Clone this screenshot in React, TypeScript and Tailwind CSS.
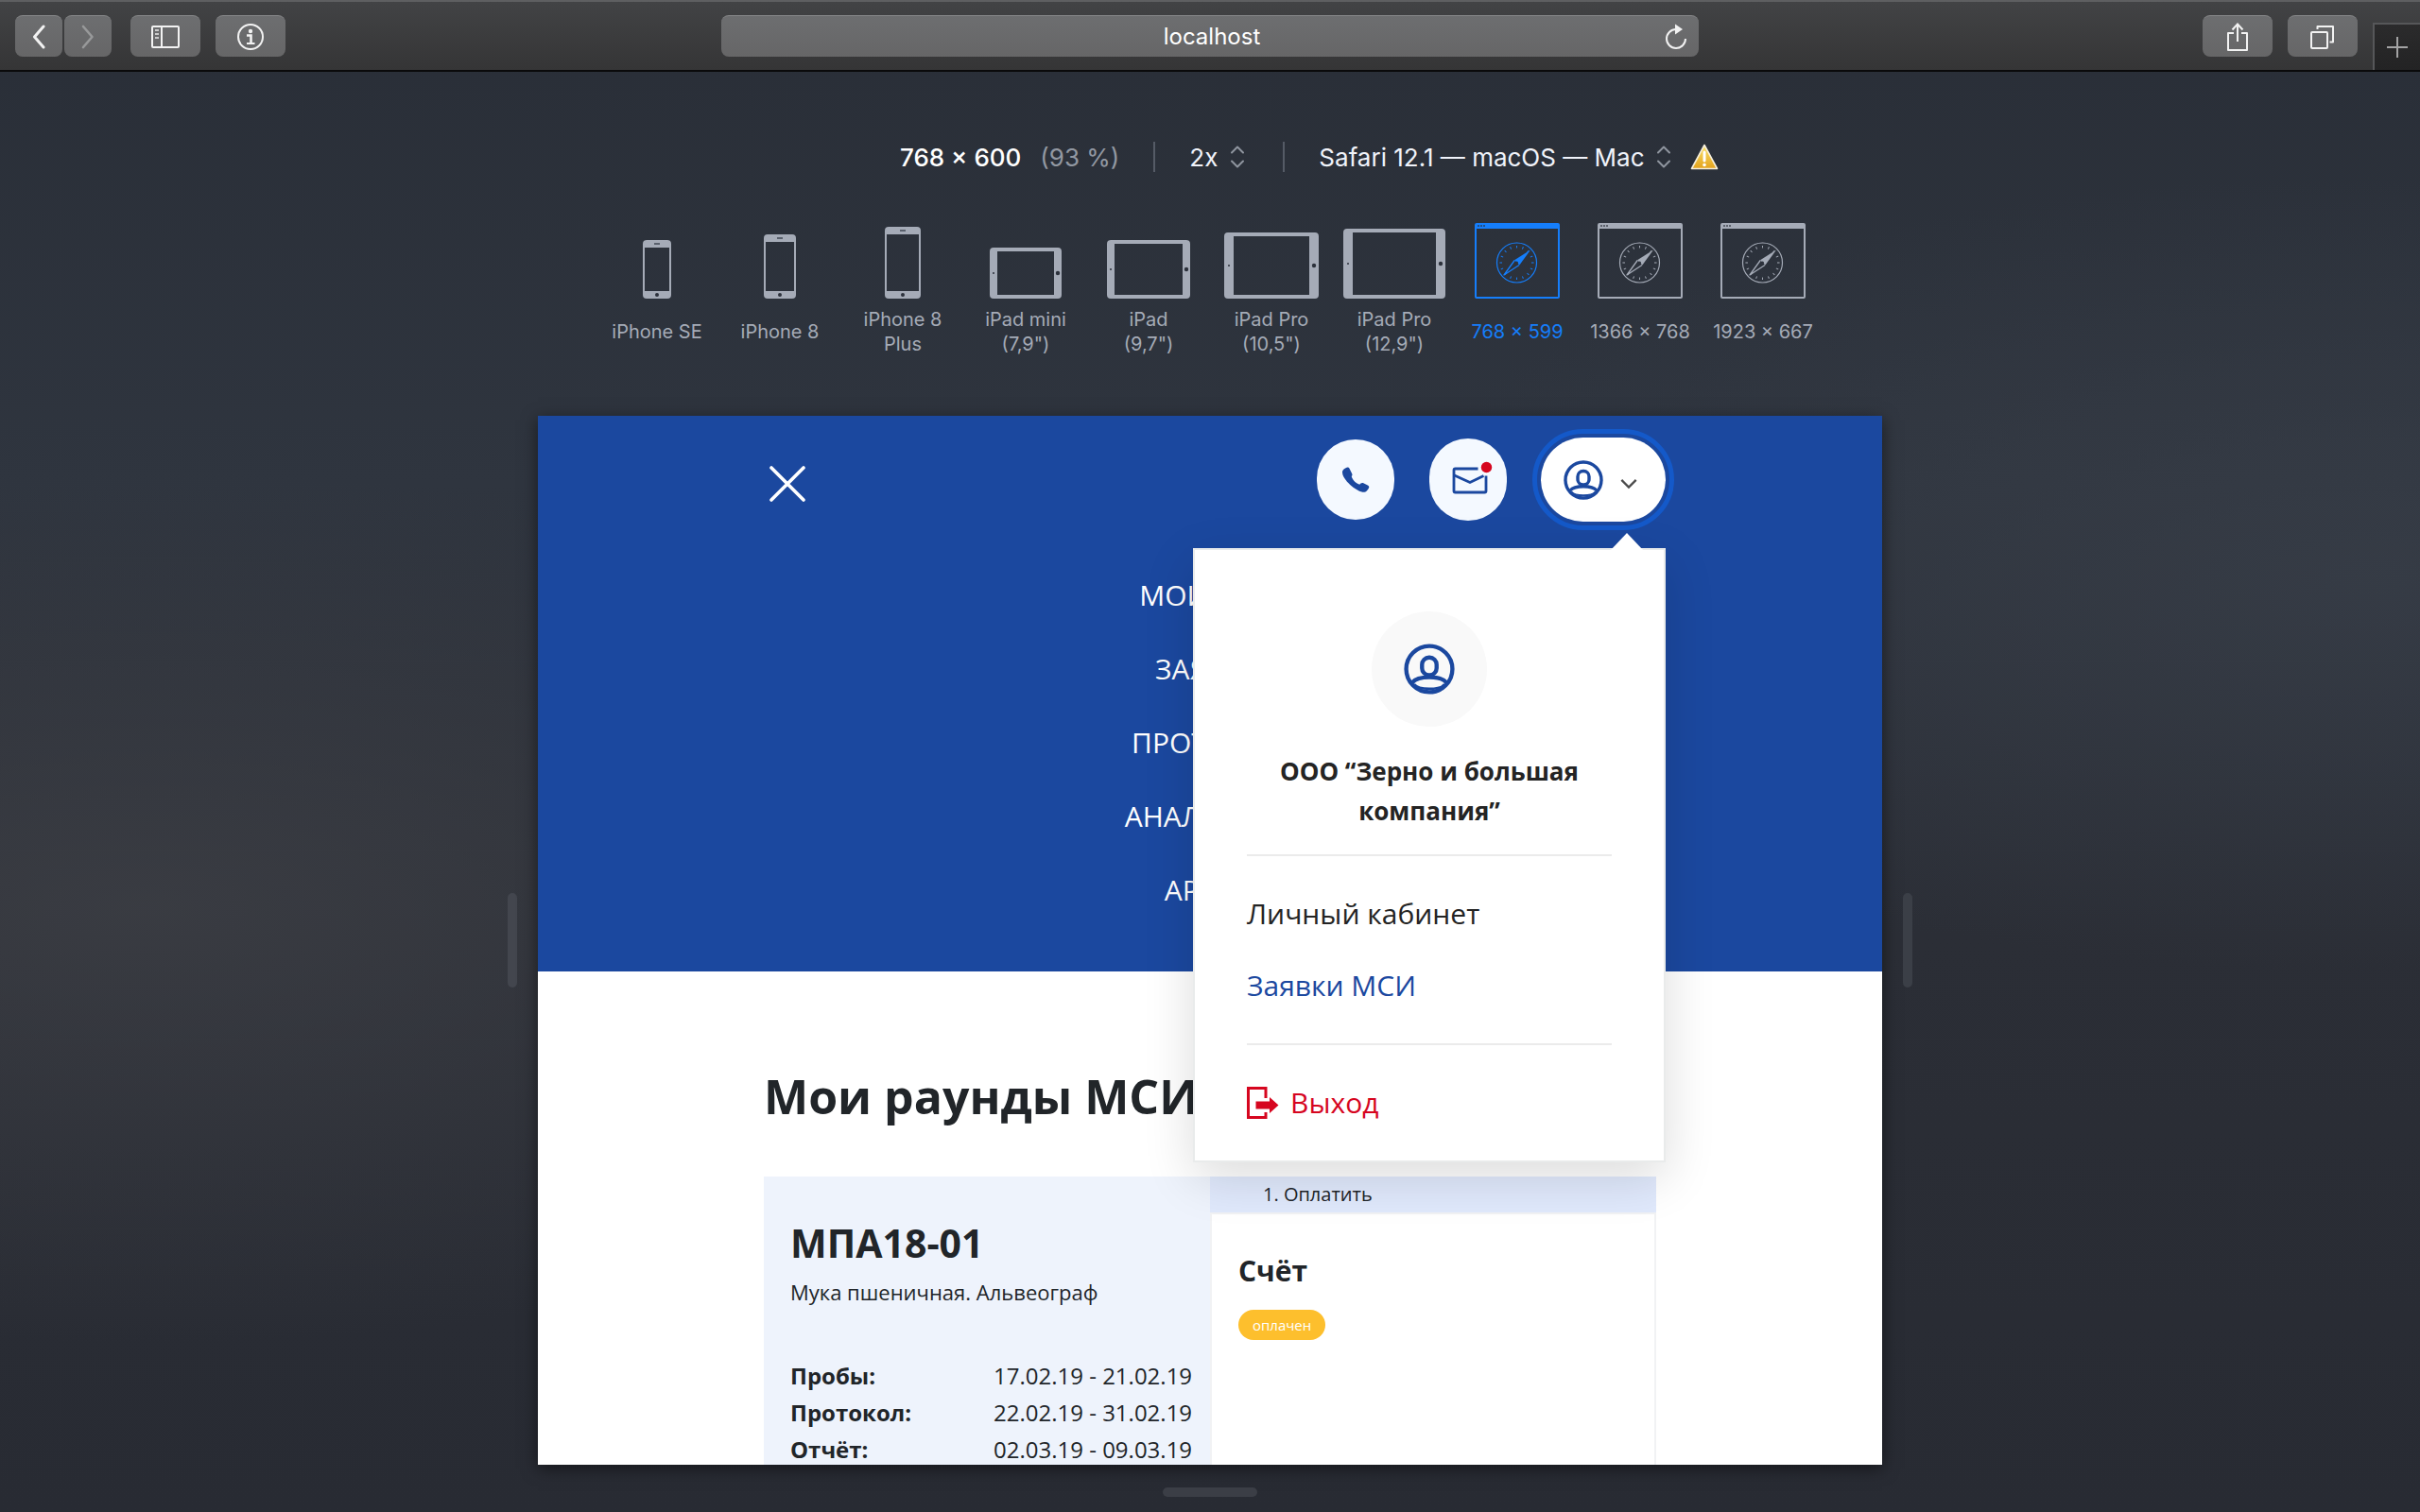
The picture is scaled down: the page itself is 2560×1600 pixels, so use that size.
import type { ReactNode } from 'react';

type Device = {
  label: string[];
  kind: 'phone' | 'tablet' | 'browser';
  width: number;
  height: number;
  active?: boolean;
};

const devices: Device[] = [
  { label: ['iPhone SE'], kind: 'phone', width: 30, height: 62 },
  { label: ['iPhone 8'], kind: 'phone', width: 34, height: 68 },
  { label: ['iPhone 8', 'Plus'], kind: 'phone', width: 38, height: 76 },
  { label: ['iPad mini', '(7,9")'], kind: 'tablet', width: 76, height: 54 },
  { label: ['iPad', '(9,7")'], kind: 'tablet', width: 88, height: 62 },
  { label: ['iPad Pro', '(10,5")'], kind: 'tablet', width: 100, height: 70 },
  { label: ['iPad Pro', '(12,9")'], kind: 'tablet', width: 108, height: 74 },
  { label: ['768 × 599'], kind: 'browser', width: 90, height: 80, active: true },
  { label: ['1366 × 768'], kind: 'browser', width: 90, height: 80 },
  { label: ['1923 × 667'], kind: 'browser', width: 90, height: 80 },
];

const menu = ['Мои МСИ', 'Заявки', 'Протокол', 'Аналитика', 'Архив'];

const dates = [
  { name: 'Пробы:', range: '17.02.19 - 21.02.19' },
  { name: 'Протокол:', range: '22.02.19 - 31.02.19' },
  { name: 'Отчёт:', range: '02.03.19 - 09.03.19' },
];

function DeviceIcon({ kind, width: w, height: h }: Device) {
  if (kind === 'phone') {
    return (
      <svg width={w} height={h} viewBox={`0 0 ${w} ${h}`} aria-hidden="true">
        <path
          fill="currentColor"
          fillRule="evenodd"
          d={`M4 0H${w - 4}a4 4 0 0 1 4 4V${h - 4}a4 4 0 0 1-4 4H4a4 4 0 0 1-4-4V4a4 4 0 0 1 4-4ZM2 8V${h - 8}H${w - 2}V8Z`}
        />
        <rect x={w / 2 - 3} y="3" width="6" height="2" fill="#59606c" />
        <circle cx={w / 2} cy={h - 4} r="2" fill="#2c313b" />
      </svg>
    );
  }
  if (kind === 'tablet') {
    const side = w > 90 ? 10 : 8;
    return (
      <svg width={w} height={h} viewBox={`0 0 ${w} ${h}`} aria-hidden="true">
        <path
          fill="currentColor"
          fillRule="evenodd"
          d={`M4 0H${w - 4}a4 4 0 0 1 4 4V${h - 4}a4 4 0 0 1-4 4H4a4 4 0 0 1-4-4V4a4 4 0 0 1 4-4ZM${side} 4V${h - 4}H${w - side}V4Z`}
        />
        <circle cx={side / 2} cy={h / 2} r="1" fill="#2c313b" />
        <circle cx={w - side / 2} cy={h / 2} r="2.2" fill="#2c313b" />
      </svg>
    );
  }
  return (
    <svg width="90" height="80" viewBox="0 0 90 80" fill="none" aria-hidden="true">
      <path
        fill="currentColor"
        fillRule="evenodd"
        d="M2 0H88a2 2 0 0 1 2 2V78a2 2 0 0 1-2 2H2a2 2 0 0 1-2-2V2a2 2 0 0 1 2-2ZM2 6V78H88V6Z"
      />
      <path d="M3 3h2M6 3h2M9 3h2" stroke="#2c313b" strokeOpacity=".6" strokeWidth="2" />
      <circle cx="44.5" cy="42" r="21" stroke="currentColor" strokeWidth="1.2" />
      <circle
        cx="44.5"
        cy="42"
        r="16.8"
        stroke="currentColor"
        strokeWidth="2.6"
        pathLength="160"
        strokeDasharray="1.5 8.5"
        strokeDashoffset="0.75"
      />
      <path fill="currentColor" d="M59 28.500 47.400 44.500 42 39.200Z" />
      <path stroke="currentColor" strokeWidth="1.3" strokeLinejoin="round" d="M47 44.500 31 55 42.200 39.500" />
      <circle cx="44.500" cy="42" r="1.500" fill="#2c313b" />
    </svg>
  );
}

function ToolbarButton({ label, className, children }: { label: string; className: string; children: ReactNode }) {
  return (
    <button
      type="button"
      aria-label={label}
      className={`flex h-11 items-center justify-center rounded-lg border-t border-[#858688] bg-linear-to-b from-[#6d6e70] to-[#666667] text-[#f2f2f2] ${className}`}
    >
      {children}
    </button>
  );
}

function Toolbar() {
  return (
    <header className="grid h-[76px] grid-cols-[1fr_1034px_1fr] border-t-2 border-b-2 border-t-[#5e5f61] border-b-[#0a0a0b] bg-linear-to-b from-[#424345] to-[#353536]">
      <div className="flex items-start pt-3.5 pl-4">
        <ToolbarButton label="Back" className="w-[50px]">
          <svg width="14" height="26" viewBox="0 0 14 26" fill="none" stroke="currentColor" strokeWidth="3" strokeLinecap="round" strokeLinejoin="round">
            <path d="M12 2 2.500 13 12 24" />
          </svg>
        </ToolbarButton>
        <ToolbarButton label="Forward" className="ml-0.5 w-[50px]">
          <svg width="14" height="26" viewBox="0 0 14 26" fill="none" stroke="#98999a" strokeWidth="2.600" strokeLinecap="round" strokeLinejoin="round">
            <path d="M2 2 11.500 13 2 24" />
          </svg>
        </ToolbarButton>
        <ToolbarButton label="Sidebar" className="ml-5 w-[74px]">
          <svg width="30" height="24" viewBox="0 0 30 24" fill="none" stroke="currentColor" strokeWidth="2">
            <rect x="1" y="1" width="28" height="22" rx="1" />
            <path d="M11 1v22" />
            <path d="M4 5h4M4 9h4M4 13h4" strokeOpacity=".7" />
          </svg>
        </ToolbarButton>
        <ToolbarButton label="Info" className="ml-4 w-[74px]">
          <svg width="28" height="28" viewBox="0 0 28 28" fill="none" stroke="currentColor" strokeWidth="2">
            <circle cx="14" cy="14" r="13" />
            <circle cx="14" cy="8" r="2.200" fill="currentColor" stroke="none" />
            <path d="M10 12.500h4.500V21" strokeWidth="2.600" />
            <path d="M10 21h8.500" />
          </svg>
        </ToolbarButton>
      </div>

      <div className="mt-3.5 flex h-11 rounded-lg border-t border-[#858688] bg-linear-to-b from-[#6d6e70] to-[#666667] pl-[52px]">
        <input
          type="text"
          aria-label="Address"
          defaultValue="localhost"
          className="min-w-0 flex-1 bg-transparent text-center text-2xl text-white outline-none"
        />
        <button type="button" aria-label="Reload" className="flex w-12 items-center justify-center text-[#f2f2f2]">
          <svg width="24" height="28" viewBox="0 0 24 28" fill="none" stroke="currentColor" strokeWidth="2">
            <path d="M12 6A10 10 0 1 0 22 16" />
            <path d="M11 0.500 19 6 11 11.500Z" fill="currentColor" stroke="none" />
          </svg>
        </button>
      </div>

      <div className="flex items-start justify-end pt-3.5">
        <ToolbarButton label="Share" className="w-[74px]">
          <svg width="24" height="32" viewBox="0 0 24 32" fill="none" stroke="currentColor" strokeWidth="2">
            <path d="M8 12H2v18h20V12h-6" strokeLinejoin="round" />
            <path d="M12 21V3M6.500 8.500 12 2.500l5.500 6" />
          </svg>
        </ToolbarButton>
        <ToolbarButton label="Tabs" className="ml-4 w-[74px]">
          <svg width="26" height="26" viewBox="0 0 26 26" fill="none" stroke="currentColor" strokeWidth="2" strokeLinejoin="round">
            <rect x="1" y="8" width="17" height="17" rx="1" />
            <path d="M7.500 5V2H24v16.500h-3.500" />
          </svg>
        </ToolbarButton>
        <button
          type="button"
          aria-label="New tab"
          className="mt-2 ml-4 flex h-[50px] w-[50px] items-center justify-center border-t-2 border-l-2 border-[#565759] bg-linear-to-b from-[#2b2b2c] to-[#232324]"
        >
          <svg width="22" height="22" viewBox="0 0 22 22" stroke="#a3a3a4" strokeWidth="2">
            <path d="M11 0v22M0 11h22" />
          </svg>
        </button>
      </div>
    </header>
  );
}

function UpDown() {
  return (
    <svg width="16" height="24" viewBox="0 0 16 24" fill="none" stroke="#8f959f" strokeWidth="2" strokeLinecap="round" strokeLinejoin="round" aria-hidden="true">
      <path d="M2 7.500 8 1.500l6 6M2 16.500l6 6 6-6" />
    </svg>
  );
}

function Warning() {
  return (
    <svg width="30" height="28" viewBox="0 0 30 28" role="img" aria-label="Warning">
      <defs>
        <linearGradient id="warn" x1="0" y1="0" x2="0" y2="1">
          <stop offset="0" stopColor="#fbe36a" />
          <stop offset="1" stopColor="#e3a21d" />
        </linearGradient>
      </defs>
      <path d="M15 1.500 28.500 26.500H1.500Z" fill="url(#warn)" stroke="#f6efdc" strokeWidth="1.600" strokeLinejoin="round" />
      <path d="M15 9v9" stroke="#fff" strokeWidth="3" strokeLinecap="round" />
      <circle cx="15" cy="22.500" r="1.800" fill="#fff" />
    </svg>
  );
}

function DeviceBar() {
  return (
    <section className="mx-auto w-full max-w-[1300px] pt-[74px]">
      <div className="flex h-8 items-center pl-[322px] text-[26px] whitespace-nowrap">
        <span className="font-medium text-white">768 × 600</span>
        <span className="ml-5 text-[#9298a2]">(93 %)</span>
        <span className="mx-9 h-8 w-0.5 bg-[#555b66]" />
        <label className="flex items-center gap-3">
          <select aria-label="Pixel ratio" className="appearance-none bg-transparent text-[#f0f3fa]">
            <option>2x</option>
          </select>
          <UpDown />
        </label>
        <span className="ml-10 mr-9 h-8 w-0.5 bg-[#555b66]" />
        <label className="flex items-center gap-3">
          <select aria-label="User agent" className="appearance-none bg-transparent text-[#f0f3fa]">
            <option>Safari 12.1 — macOS — Mac</option>
          </select>
          <UpDown />
        </label>
        <span className="ml-5">
          <Warning />
        </span>
      </div>

      <div className="mt-[54px] grid grid-cols-10">
        {devices.map((device) => (
          <button
            key={device.label.join(' ')}
            type="button"
            className={`flex flex-col items-center whitespace-nowrap ${device.active ? 'text-[#157efb]' : 'text-[#a5abb7]'}`}
          >
            <span className="flex h-20 items-end">
              <DeviceIcon {...device} />
            </span>
            <span className="mt-[9px] flex h-[52px] flex-col justify-center text-xl leading-[26px]">
              {device.label.map((line) => (
                <span key={line}>{line}</span>
              ))}
            </span>
          </button>
        ))}
      </div>
    </section>
  );
}

function UserIcon({ className }: { className: string }) {
  return (
    <svg viewBox="0 0 42 42" fill="none" stroke="#1b489f" strokeWidth="3.400" className={className} aria-hidden="true">
      <circle cx="21" cy="21" r="19" />
      <rect x="15" y="11.500" width="12" height="14.500" rx="5.800" />
      <path d="M7 32C9.500 29 14 27.700 21 27.700S32.500 29 35 32" />
      <path d="M8.500 33.500C12 38.500 30 38.500 33.500 33.500" strokeWidth="2" />
    </svg>
  );
}

function AccountMenu() {
  return (
    <div className="absolute top-[117px] right-0 w-[500px] border-2 border-[#e9ebeb] bg-white px-[55px] pt-[65px] pb-[41px] text-[#242424] shadow-[0_16px_50px_rgba(0,0,0,0.14)]">
      <svg width="34" height="18" viewBox="0 0 34 18" className="absolute -top-[18px] right-[22px]" aria-hidden="true">
        <path d="M0 18 17 0l17 18Z" fill="#fff" />
      </svg>
      <div className="mx-auto flex h-[122px] w-[122px] items-center justify-center rounded-full bg-[#f9f9f9]">
        <UserIcon className="h-[54px] w-[54px]" />
      </div>
      <p className="mt-[26px] text-center text-[26px] leading-[42px] font-bold">
        ООО “Зерно и большая компания”
      </p>
      <ul className="mt-[25px] border-y-2 border-[#ebebeb] py-[23px] text-3xl">
        <li>
          <a href="#account" className="block leading-[76px]">
            Личный кабинет
          </a>
        </li>
        <li>
          <a href="#requests" className="block leading-[76px] text-[#1b489f]">
            Заявки МСИ
          </a>
        </li>
      </ul>
      <a href="#logout" className="mt-[41px] flex items-center gap-3 text-3xl leading-10 text-[#d6061f]">
        <svg width="34" height="34" viewBox="0 0 34 34" fill="none" aria-hidden="true">
          <path d="M20 12V1.500H1.500v31H20V27" stroke="currentColor" strokeWidth="3" />
          <path d="M9.500 15.500H24V11l9.500 8.500L24 28v-4.500H9.500Z" fill="currentColor" />
        </svg>
        Выход
      </a>
    </div>
  );
}

function SiteHeader() {
  return (
    <header className="bg-[#1b489f] pt-[23px] pb-[47px]">
      <div className="mx-auto flex w-full max-w-[964px] items-center pl-4">
        <button type="button" aria-label="Закрыть меню" className="mt-2">
          <svg width="38" height="38" viewBox="0 0 38 38" stroke="#fff" strokeWidth="3.600" strokeLinecap="round">
            <path d="M2 2l34 34M36 2 2 36" />
          </svg>
        </button>
        <a href="#phone" aria-label="Телефон" className="ml-auto flex h-[85px] w-[82px] items-center justify-center rounded-full bg-[#f4f9ff]">
          <svg width="30" height="28" viewBox="0 0 30 28" fill="#1b489f" aria-hidden="true">
            <path d="M6.500 0.500C4 1 1.200 3 1 5.500 0.800 10 5.500 16 11 20.500c4 3.200 9 6.500 13.500 6.300 2-.3 4.200-3.300 4.800-5.300.1-1-1-1.800-2.500-2.500l-4-2c-1.500-.4-2.600.5-3.500 1.700-3.500-.8-7.500-4.700-8.600-8.700.8-.7 1-1.500.6-2.600L8.500 1.800C8 .8 7.300.4 6.500.5Z" />
          </svg>
        </a>
        <a href="#mail" aria-label="Сообщения" className="ml-[37px] flex h-[87px] w-[82px] items-center justify-center rounded-full bg-[#f4f9ff]">
          <svg width="54" height="42" viewBox="-9 -1 54 42" fill="none" aria-hidden="true">
            <path d="M28.500 8H4.500A1.500 1.500 0 0 0 3 9.500v22A1.500 1.500 0 0 0 4.500 33h31a1.500 1.500 0 0 0 1.500-1.500V15.500" stroke="#1b489f" strokeWidth="2.800" />
            <path d="M3.500 15 20 22.500 34.500 15.500" stroke="#1b489f" strokeWidth="2.800" />
            <circle cx="37.500" cy="6.500" r="5.700" fill="#d6061f" />
          </svg>
        </a>
        <div className="relative ml-9">
          <button
            type="button"
            aria-label="Аккаунт"
            aria-expanded="true"
            className="flex h-[89px] w-[132px] items-center gap-[18px] rounded-full bg-white pl-6 outline-[5px] outline-offset-4 outline-[#1459c9]"
          >
            <UserIcon className="h-[42px] w-[42px]" />
            <svg width="18" height="12" viewBox="0 0 20 12" fill="none" stroke="#4b4b4b" strokeWidth="2.600" className="mt-2" aria-hidden="true">
              <path d="M1.500 1.500 10 10l8.500-8.500" />
            </svg>
          </button>
          <AccountMenu />
        </div>
      </div>
      <nav className="mt-[39px]">
        <ul className="text-center text-3xl text-white uppercase">
          {menu.map((item) => (
            <li key={item}>
              <a href="#menu" className="leading-[78px]">
                {item}
              </a>
            </li>
          ))}
        </ul>
      </nav>
    </header>
  );
}

function RoundCard() {
  return (
    <article className="grid grid-cols-2">
      <div className="bg-[#eef3fc] pt-[46px] pl-7">
        <h2 className="text-[41px] leading-[48px] font-bold">МПА18-01</h2>
        <p className="mt-3 text-[22px] leading-8">Мука пшеничная. Альвеограф</p>
        <table className="mt-[53px] text-2xl leading-[39px]">
          <tbody>
            {dates.map((row) => (
              <tr key={row.name}>
                <th scope="row" className="w-[215px] p-0 text-left font-bold">
                  {row.name}
                </th>
                <td className="p-0 whitespace-nowrap">{row.range}</td>
              </tr>
            ))}
          </tbody>
        </table>
      </div>
      <div className="flex flex-col">
        <div className="bg-[#e0e9fc] pl-14 text-xl leading-[38px]">1. Оплатить</div>
        <div className="h-[340px] border-2 border-[#f1f2f4] pt-10 pl-7">
          <h3 className="text-3xl leading-10 font-bold">Счёт</h3>
          <span className="mt-[21px] inline-block rounded-full bg-[#fdbf2d] px-[15px] text-[15px] leading-8 text-white">
            оплачен
          </span>
        </div>
      </div>
    </article>
  );
}

export default function App() {
  return (
    <div className="flex h-screen flex-col overflow-hidden bg-[#292c34] bg-[radial-gradient(ellipse_at_6%_60%,rgba(62,64,70,0.75),transparent_34%),radial-gradient(ellipse_at_98%_38%,rgba(56,62,72,0.75),transparent_30%),linear-gradient(to_bottom,#292e37_0%,#2f353f_32%,#2b2e36_62%,#282b33_100%)] font-['Inter',sans-serif]">
      <Toolbar />
      <DeviceBar />
      <main className="mt-[63px] flex min-h-0 flex-1 items-center justify-center gap-[22px]">
        <span className="h-[100px] w-2.5 rounded-full bg-[#43464e]" />
        <div className="h-full w-full max-w-[1422px] overflow-hidden bg-white font-['Open_Sans','Noto_Sans',sans-serif] text-[#212529] shadow-[0_4px_16px_rgba(0,0,0,0.5)]">
          <SiteHeader />
          <div className="mx-auto w-full max-w-[944px] pt-[102px]">
            <h1 className="mb-[55px] text-[50px] leading-[60px] font-bold">Мои раунды МСИ</h1>
            <RoundCard />
          </div>
        </div>
        <span className="h-[100px] w-2.5 rounded-full bg-[#3b3f47]" />
      </main>
      <footer className="flex h-[50px] shrink-0 items-end justify-center pb-4">
        <span className="h-2.5 w-[100px] rounded-full bg-[#3b3e46]" />
      </footer>
    </div>
  );
}
